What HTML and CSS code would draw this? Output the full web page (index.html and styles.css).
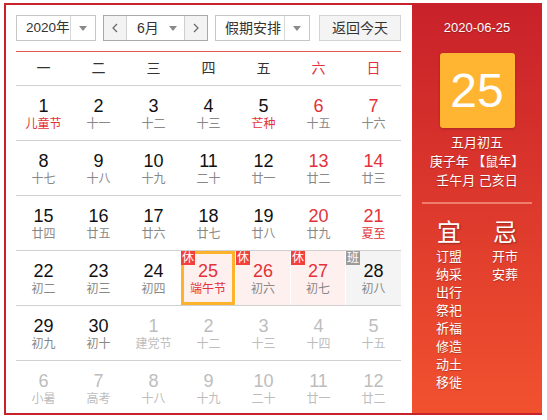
FILE: index.html
```html
<!DOCTYPE html>
<html lang="zh">
<head>
<meta charset="utf-8">
<title>万年历</title>
<link rel="stylesheet" href="styles.css">
</head>
<body>
<div class="cal">
  <div class="main">
    <div class="controls">
      <div class="sel year"><span class="val">2020年</span><span class="arr"><i class="tri"></i></span></div>
      <div class="month">
        <span class="nav prev"><svg width="6" height="10" viewBox="0 0 6 10"><polyline points="5,1 1,5 5,9" fill="none" stroke="#666" stroke-width="1.2"/></svg></span>
        <span class="mval"><span>6月</span><i class="tri"></i></span>
        <span class="nav next"><svg width="6" height="10" viewBox="0 0 6 10"><polyline points="1,1 5,5 1,9" fill="none" stroke="#666" stroke-width="1.2"/></svg></span>
      </div>
      <div class="sel hol"><span class="val">假期安排</span><span class="arr"><i class="tri"></i></span></div>
      <div class="btn">返回今天</div>
    </div>
    <div class="week">
      <span>一</span><span>二</span><span>三</span><span>四</span><span>五</span><span class="wr">六</span><span class="wr">日</span>
    </div>
    <div class="row">
      <div class="c"><span class="n">1</span><span class="l fr">儿童节</span></div>
      <div class="c"><span class="n">2</span><span class="l">十一</span></div>
      <div class="c"><span class="n">3</span><span class="l">十二</span></div>
      <div class="c"><span class="n">4</span><span class="l">十三</span></div>
      <div class="c"><span class="n">5</span><span class="l fr">芒种</span></div>
      <div class="c we"><span class="n">6</span><span class="l">十五</span></div>
      <div class="c we"><span class="n">7</span><span class="l">十六</span></div>
    </div>
    <div class="row">
      <div class="c"><span class="n">8</span><span class="l">十七</span></div>
      <div class="c"><span class="n">9</span><span class="l">十八</span></div>
      <div class="c"><span class="n">10</span><span class="l">十九</span></div>
      <div class="c"><span class="n">11</span><span class="l">二十</span></div>
      <div class="c"><span class="n">12</span><span class="l">廿一</span></div>
      <div class="c we"><span class="n">13</span><span class="l">廿二</span></div>
      <div class="c we"><span class="n">14</span><span class="l">廿三</span></div>
    </div>
    <div class="row">
      <div class="c"><span class="n">15</span><span class="l">廿四</span></div>
      <div class="c"><span class="n">16</span><span class="l">廿五</span></div>
      <div class="c"><span class="n">17</span><span class="l">廿六</span></div>
      <div class="c"><span class="n">18</span><span class="l">廿七</span></div>
      <div class="c"><span class="n">19</span><span class="l">廿八</span></div>
      <div class="c we"><span class="n">20</span><span class="l">廿九</span></div>
      <div class="c we"><span class="n">21</span><span class="l fr">夏至</span></div>
    </div>
    <div class="row">
      <div class="c"><span class="n">22</span><span class="l">初二</span></div>
      <div class="c"><span class="n">23</span><span class="l">初三</span></div>
      <div class="c"><span class="n">24</span><span class="l">初四</span></div>
      <div class="c we rest today"><i class="b">休</i><span class="n">25</span><span class="l fr">端午节</span></div>
      <div class="c we rest"><i class="b">休</i><span class="n">26</span><span class="l">初六</span></div>
      <div class="c we rest"><i class="b">休</i><span class="n">27</span><span class="l">初七</span></div>
      <div class="c work"><i class="b g">班</i><span class="n">28</span><span class="l">初八</span></div>
    </div>
    <div class="row">
      <div class="c"><span class="n">29</span><span class="l">初九</span></div>
      <div class="c"><span class="n">30</span><span class="l">初十</span></div>
      <div class="c o"><span class="n">1</span><span class="l">建党节</span></div>
      <div class="c o"><span class="n">2</span><span class="l">十二</span></div>
      <div class="c o"><span class="n">3</span><span class="l">十三</span></div>
      <div class="c o"><span class="n">4</span><span class="l">十四</span></div>
      <div class="c o"><span class="n">5</span><span class="l">十五</span></div>
    </div>
    <div class="row">
      <div class="c o"><span class="n">6</span><span class="l">小暑</span></div>
      <div class="c o"><span class="n">7</span><span class="l">高考</span></div>
      <div class="c o"><span class="n">8</span><span class="l">十八</span></div>
      <div class="c o"><span class="n">9</span><span class="l">十九</span></div>
      <div class="c o"><span class="n">10</span><span class="l">二十</span></div>
      <div class="c o"><span class="n">11</span><span class="l">廿一</span></div>
      <div class="c o"><span class="n">12</span><span class="l">廿二</span></div>
    </div>
  </div>
  <div class="side">
    <div class="date">2020-06-25</div>
    <div class="big">25</div>
    <div class="lunar">五月初五</div>
    <div class="lunar">庚子年 【鼠年】</div>
    <div class="lunar">壬午月 己亥日</div>
    <div class="divider"></div>
    <div class="yj">
      <div class="col">
        <span class="h">宜</span>
        <span class="i">订盟</span><span class="i">纳采</span><span class="i">出行</span><span class="i">祭祀</span>
        <span class="i">祈福</span><span class="i">修造</span><span class="i">动土</span><span class="i">移徙</span>
      </div>
      <div class="col">
        <span class="h">忌</span>
        <span class="i">开市</span><span class="i">安葬</span>
      </div>
    </div>
  </div>
</div>
</body>
</html>
```
FILE: styles.css
```css
body {
  margin: 0;
  font-family: "Liberation Sans", "Noto Sans CJK SC", sans-serif;
  background: #fff;
}
.cal {
  display: flex;
  margin: 3px 0 0 4px;
  width: 538px;
  height: 412px;
  box-sizing: border-box;
  border: 2px solid #c8232b;
  border-right: none;
  background: #fff;
}
.main {
  width: 406px;
  padding: 10px 11px 0 10px;
  box-sizing: border-box;
  overflow: hidden;
}
.controls {
  display: flex;
  height: 26px;
  margin-bottom: 10px;
  font-size: 14px;
  color: #333;
  white-space: nowrap;
}
.sel {
  display: flex;
  height: 26px;
  box-sizing: border-box;
  border: 1px solid #c6c6c6;
}
.year { width: 80px; margin-right: 7px; }
.hol { width: 95px; margin-right: 9px; }
.sel .val {
  flex: 1;
  min-width: 0;
  padding-left: 9px;
  line-height: 24px;
}
.year .val { font-size: 13.5px; }
.sel .arr {
  flex: 0 0 24px;
  border-left: 1px solid #d8d8d8;
  display: flex;
  align-items: center;
  justify-content: center;
}
.tri {
  width: 0;
  height: 0;
  border-left: 4px solid transparent;
  border-right: 4px solid transparent;
  border-top: 5px solid #8a8a8a;
}
.month {
  display: flex;
  width: 105px;
  height: 26px;
  margin-right: 7px;
  box-sizing: border-box;
  border: 1px solid #a9a9a9;
}
.nav {
  width: 22px;
  background: #f3f3f3;
  display: flex;
  align-items: center;
  justify-content: center;
}
.prev { border-right: 1px solid #cfcfcf; }
.next { border-left: 1px solid #cfcfcf; }
.mval {
  flex: 1;
  display: flex;
  align-items: center;
  justify-content: space-between;
  padding: 0 7px 0 10px;
  line-height: 24px;
}
.btn {
  width: 82px;
  height: 26px;
  box-sizing: border-box;
  border: 1px solid #d3d3d3;
  background: #f4f4f4;
  text-align: center;
  line-height: 24px;
}
.week {
  display: grid;
  grid-template-columns: repeat(7, 55px);
  height: 34px;
  box-sizing: border-box;
  border-top: 1px solid #e45a50;
  line-height: 33px;
  text-align: center;
  font-size: 14px;
  color: #333;
}
.week .wr { color: #e2323a; }
.row {
  display: grid;
  grid-template-columns: repeat(7, 55px);
  height: 55px;
  box-sizing: border-box;
  border-top: 1px solid #d0d0d0;
}
.c {
  position: relative;
  height: 54px;
  box-sizing: border-box;
  padding-top: 10px;
  text-align: center;
}
.n {
  display: block;
  font-size: 18px;
  line-height: 20px;
  color: #111;
}
.l {
  display: block;
  font-size: 12px;
  line-height: 16px;
  color: #888;
}
.we .n { color: #e2323a; }
.l.fr { color: #e2323a; }
.o .n, .o .l { color: #bdbdbd; }
.rest { background: #fff0f0; margin-right: 1px; }
.work { background: #f4f4f4; }
.today { box-shadow: inset 0 0 0 3px #ffb32c; }
.b {
  position: absolute;
  left: 0;
  top: 0;
  width: 14px;
  height: 14px;
  line-height: 14px;
  font-size: 12px;
  font-style: normal;
  color: #fff;
  background: #f2403a;
  text-align: center;
}
.b.g { background: #9b9b9b; }
.side {
  width: 130px;
  background: linear-gradient(#c9212a, #f2512f);
  color: #fff;
  text-align: center;
  text-shadow: 0 1px 1px rgba(0, 0, 0, 0.25);
  display: flex;
  flex-direction: column;
  align-items: center;
  padding-top: 13px;
  box-sizing: border-box;
}
.date { font-size: 13px; line-height: 20px; }
.big {
  width: 75px;
  height: 75px;
  margin-top: 15px;
  margin-bottom: 5px;
  background: #ffb531;
  border-radius: 3px;
  box-shadow: 0 1px 3px rgba(0, 0, 0, 0.2);
  font-size: 48px;
  line-height: 75px;
  text-shadow: none;
}
.lunar { font-size: 13px; line-height: 19px; }
.divider {
  width: 110px;
  height: 2px;
  margin-top: 12px;
  background: #ef7e6e;
}
.yj { display: flex; margin-top: 14px; }
.col {
  width: 56px;
  display: flex;
  flex-direction: column;
  align-items: center;
}
.col .h { font-size: 24px; line-height: 30px; text-shadow: 1px 1px 2px rgba(0, 0, 0, 0.35); }
.col .i { font-size: 13px; line-height: 18px; }
```
